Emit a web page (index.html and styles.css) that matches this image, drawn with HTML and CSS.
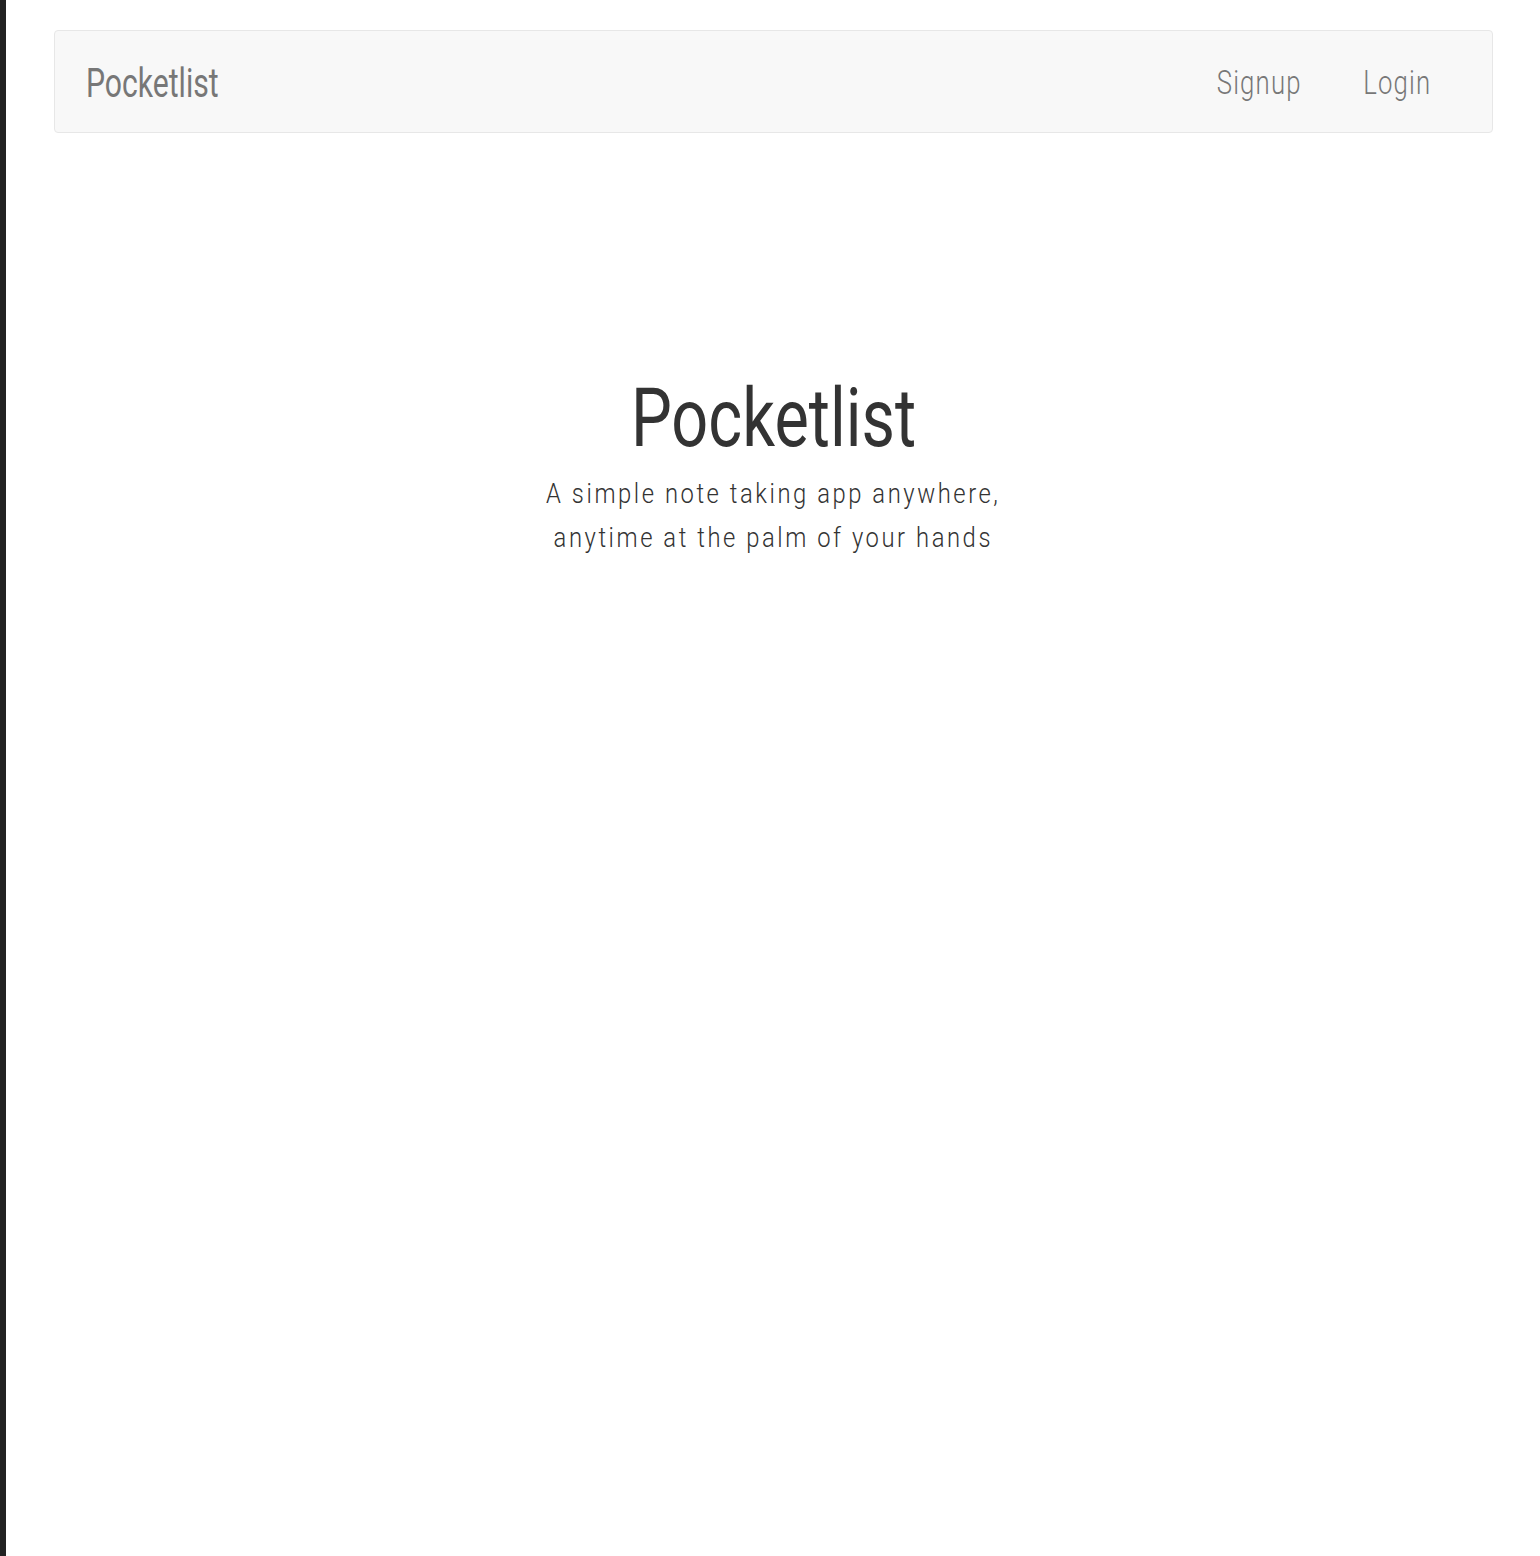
FILE: index.html
```html
<!DOCTYPE html>
<html lang="en">
<head>
<meta charset="utf-8">
<title>Pocketlist</title>
<link rel="stylesheet" href="styles.css">
</head>
<body>
<nav class="navbar">
  <a class="brand" href="#">Pocketlist</a>
  <ul class="nav-links">
    <li><a href="#">Signup</a></li>
    <li><a href="#">Login</a></li>
  </ul>
</nav>
<main class="hero">
  <h1 class="hero-title"><span class="squeeze">Pocketlist</span></h1>
  <p class="hero-sub"><span class="squeeze">A simple note taking app anywhere,<br>anytime at the palm of your hands</span></p>
</main>
</body>
</html>
```
FILE: styles.css
```css
html, body {
  margin: 0;
  padding: 0;
}
body {
  background: #fff;
  border-left: 6px solid #222;
  min-height: 1556px;
  box-sizing: border-box;
  font-family: Roboto, "Liberation Sans", sans-serif;
  color: #333;
}
.navbar {
  display: flex;
  align-items: flex-start;
  justify-content: space-between;
  height: 101px;
  margin: 30px 47px 0 48px;
  padding: 0 30px 0 31px;
  background: #f8f8f8;
  border: 1px solid #e7e7e7;
  border-radius: 4px;
}
.brand {
  display: block;
  padding-top: 3px;
  font-size: 41px;
  line-height: 98px;
  color: #777;
  text-decoration: none;
  transform: scaleX(0.735);
  transform-origin: left center;
}
.nav-links {
  display: flex;
  list-style: none;
  margin: 0;
  padding: 0;
  transform: scaleX(0.78);
  transform-origin: right center;
}
.nav-links a {
  display: block;
  padding: 2px 39.5px 0;
  font-size: 33px;
  font-weight: 300;
  line-height: 99px;
  letter-spacing: 1.5px;
  color: #777;
  text-decoration: none;
}
.hero {
  text-align: center;
  padding-top: 237px;
}
.squeeze {
  display: inline-block;
}
.hero-title {
  margin: 0;
  font-size: 82px;
  line-height: 96px;
  font-weight: 400;
  color: #333;
}
.hero-title .squeeze {
  transform: scaleX(0.79);
}
.hero-sub {
  margin: 6px 0 0;
  font-size: 28px;
  line-height: 44px;
  font-weight: 300;
  color: #333;
}
.hero-sub .squeeze {
  letter-spacing: 3px;
  transform: scaleX(0.85);
}
```
